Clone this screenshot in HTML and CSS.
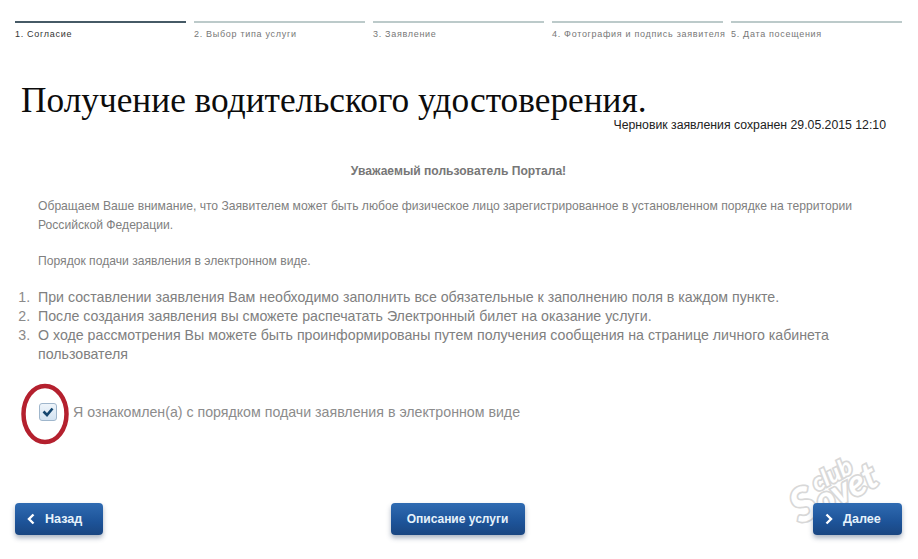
FILE: index.html
```html
<!DOCTYPE html>
<html lang="ru">
<head>
<meta charset="utf-8">
<title>Получение водительского удостоверения</title>
<link rel="stylesheet" href="styles.css">
</head>
<body>
<div class="page">
  <ol class="steps">
    <li class="step step-active">1. Согласие</li>
    <li class="step">2. Выбор типа услуги</li>
    <li class="step">3. Заявление</li>
    <li class="step">4. Фотография и подпись заявителя</li>
    <li class="step">5. Дата посещения</li>
  </ol>
  <h1 class="title">Получение водительского удостоверения.</h1>
  <p class="draft">Черновик заявления сохранен 29.05.2015 12:10</p>
  <p class="greeting">Уважаемый пользователь Портала!</p>
  <p class="note note-first">Обращаем Ваше внимание, что Заявителем может быть любое физическое лицо зарегистрированное в установленном порядке на территории Российской Федерации.</p>
  <p class="note note-second">Порядок подачи заявления в электронном виде.</p>
  <ol class="rules">
    <li>При составлении заявления Вам необходимо заполнить все обязательные к заполнению поля в каждом пункте.</li>
    <li>После создания заявления вы сможете распечатать Электронный билет на оказание услуги.</li>
    <li>О ходе рассмотрения Вы можете быть проинформированы путем получения сообщения на странице личного кабинета пользователя</li>
  </ol>
  <div class="agree">
    <span class="checkbox">
      <svg viewBox="0 0 18 18" width="18" height="18" aria-hidden="true"><path d="M4.5 8.5 L8 12 L13.5 5.5" fill="none" stroke="#14466f" stroke-width="2.6"/></svg>
    </span>
    <span class="agree-text">Я ознакомлен(а) с порядком подачи заявления в электронном виде</span>
    <svg class="circle" viewBox="0 0 50 64" width="50" height="64" aria-hidden="true"><ellipse cx="25" cy="32" rx="21.5" ry="28" fill="none" stroke="#b4202e" stroke-width="4.5"/></svg>
  </div>
  <div class="mark" aria-hidden="true"><span class="mark-club">club</span><span class="mark-s">S</span><span class="mark-ovet">ovet</span></div>
  <div class="actions">
    <button class="btn btn-back" type="button">
      <svg viewBox="0 0 10 12" width="10" height="12" aria-hidden="true"><path d="M7.5 1.5 L3 6 L7.5 10.5" fill="none" stroke="#fff" stroke-width="2.4"/></svg>
      <span>Назад</span>
    </button>
    <button class="btn btn-mid" type="button"><span>Описание услуги</span></button>
    <button class="btn btn-next" type="button">
      <svg viewBox="0 0 10 12" width="10" height="12" aria-hidden="true"><path d="M2.5 1.5 L7 6 L2.5 10.5" fill="none" stroke="#fff" stroke-width="2.4"/></svg>
      <span>Далее</span>
    </button>
  </div>
</div>
</body>
</html>
```
FILE: styles.css
```css
* { box-sizing: border-box; }
html, body { margin: 0; padding: 0; background: #fff; }
.page {
  position: relative;
  width: 918px;
  height: 559px;
  overflow: hidden;
  padding: 21px 16px 0 15px;
  font-family: "Liberation Sans", Arial, sans-serif;
}
.steps {
  display: flex;
  gap: 8px;
  list-style: none;
  margin: 0;
  padding: 0;
}
.step {
  flex: 0 0 171px;
  min-width: 0;
  border-top: 2px solid #bccaca;
  padding-top: 6px;
  font-size: 9px;
  line-height: 11px;
  letter-spacing: 0.7px;
  color: #777;
  white-space: nowrap;
}
.step-active { border-top-color: #465a66; color: #333; }
.title {
  margin: 40px 0 0 6px;
  font-family: "Liberation Serif", "Times New Roman", serif;
  font-weight: 400;
  font-size: 35.3px;
  line-height: 41px;
  color: #0c0c0c;
}
.draft {
  margin: -3px 16px 0 0;
  text-align: right;
  font-size: 12.27px;
  line-height: 14px;
  color: #222;
}
.greeting {
  margin: 32px 0 0;
  text-align: center;
  font-size: 12.1px;
  line-height: 15px;
  font-weight: 700;
  color: #777;
}
.note {
  margin: 0 0 0 23px;
  font-size: 12.13px;
  line-height: 19px;
  color: #808080;
  width: 840px;
}
.note-first { margin-top: 18px; }
.note-second { margin-top: 17px; }
.rules {
  margin: 17px 0 0;
  padding: 0 30px 0 23px;
  font-size: 14.2px;
  line-height: 19px;
  color: #808080;
}
.rules li::marker { content: counter(list-item) ".  "; color: #8a8a8a; }
.agree {
  position: relative;
  display: flex;
  align-items: center;
  gap: 16px;
  margin: 38px 0 0 24px;
  height: 20px;
}
.checkbox {
  display: block;
  width: 18px;
  height: 18px;
  border: 1px solid #9fb6cc;
  border-radius: 3px;
  background: linear-gradient(#eef4fa, #d3e3f2);
  flex: none;
}
.checkbox svg { display: block; margin: -1px; }
.agree-text { font-size: 14.2px; color: #8c8c8c; }
.circle { position: absolute; left: -19px; top: -20px; }
.actions {
  display: flex;
  justify-content: space-between;
  margin-top: 81px;
}
.btn {
  position: relative;
  display: flex;
  align-items: center;
  gap: 9px;
  height: 32px;
  border: 0;
  padding: 0 0 0 11px;
  border-radius: 4px;
  background: linear-gradient(#2f6bb2, #1d5398 60%, #1a4681);
  box-shadow: 0 3px 5px rgba(70, 90, 120, 0.45);
  font-family: "Liberation Sans", Arial, sans-serif;
  font-size: 12.6px;
  font-weight: 700;
  color: #e6f2fb;
}
.btn-back { width: 88px; }
.btn-next { width: 89px; }
.btn-mid {
  width: 134px;
  margin-right: 1px;
  padding: 0;
  justify-content: center;
  font-size: 12px;
}
.mark {
  position: absolute;
  left: 786px;
  top: 433px;
  width: 110px;
  height: 76px;
  transform: rotate(-28deg);
  font-family: Lato, "Liberation Sans", sans-serif;
  font-style: italic;
  font-weight: 700;
  color: #fff;
  -webkit-text-stroke: 3.5px #d8d8d8;
  paint-order: stroke fill;
}
.mark-club { position: absolute; left: 24px; top: 24px; font-size: 24px; line-height: 24px; }
.mark-s { position: absolute; left: -6px; top: 26px; font-size: 46px; line-height: 46px; }
.mark-ovet { position: absolute; left: 18px; top: 36px; font-size: 36px; line-height: 36px; }
```
